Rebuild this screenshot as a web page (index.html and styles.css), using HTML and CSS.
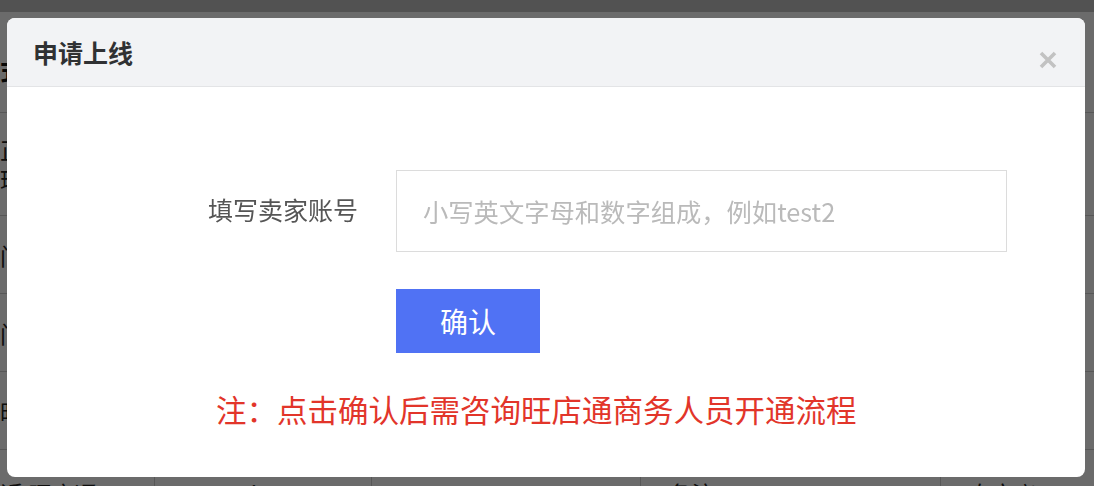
FILE: index.html
```html
<!DOCTYPE html>
<html lang="zh-CN">
<head>
<meta charset="utf-8">
<title>申请上线</title>
<link rel="stylesheet" href="styles.css">
</head>
<body>
<div class="page">
  <div class="topbar"></div>
  <h2 class="page-title">式</h2>
  <table class="grid">
    <colgroup><col class="c1"><col class="c2"><col class="c3"><col class="c4"><col class="c5"></colgroup>
    <tr class="r1"><td>正式<br>环境</td><td></td><td></td><td></td><td></td></tr>
    <tr class="r2"><td>门店</td><td></td><td></td><td></td><td></td></tr>
    <tr class="r3"><td>门店</td><td></td><td></td><td></td><td></td></tr>
    <tr class="r4"><td>旺店</td><td></td><td></td><td></td><td></td></tr>
    <tr class="r5"><td>近 旺店通</td><td>autoprj003</td><td>34819610</td><td>备注</td><td>自定义</td></tr>
  </table>
</div>
<div class="mask"></div>
<div class="modal">
  <div class="modal-header">
    <span class="modal-title">申请上线</span>
    <span class="modal-close" aria-label="关闭">
      <svg width="18" height="18" viewBox="0 0 18 18"><path d="M2 2 L16 16 M16 2 L2 16" stroke="#c2c2c2" stroke-width="3.6" stroke-linecap="butt"/></svg>
    </span>
  </div>
  <div class="modal-body">
    <div class="form-row">
      <label class="form-label">填写卖家账号</label>
      <input class="form-input" type="text" placeholder="小写英文字母和数字组成，例如test2">
    </div>
    <div class="form-actions">
      <button class="btn-primary">确认</button>
    </div>
    <p class="note">注：点击确认后需咨询旺店通商务人员开通流程</p>
  </div>
</div>
</body>
</html>
```

FILE: styles.css
```css
html, body {
  margin: 0;
  padding: 0;
  height: 100%;
  overflow: hidden;
}
body {
  font-family: "Noto Sans CJK SC", "Noto Sans", sans-serif;
  background: #ffffff;
  color: #222;
}
.page {
  width: 1094px;
}
.topbar {
  height: 12px;
  background: #c4c4c4;
}
.page-title {
  margin: 0;
  height: 100px;
  line-height: 116px;
  font-size: 26px;
  font-weight: 700;
  color: #111;
}
.grid {
  border-collapse: collapse;
  table-layout: fixed;
  width: 1094px;
  font-size: 23px;
  color: #222;
}
.grid .c1 { width: 154px; }
.grid .c2 { width: 217px; }
.grid .c3 { width: 269px; }
.grid .c4 { width: 300px; }
.grid .c5 { width: 154px; }
.grid td {
  border-top: 1px solid #d0d0d0;
  border-right: 1px solid #d0d0d0;
  padding: 0;
  vertical-align: middle;
  white-space: nowrap;
  overflow: hidden;
}
.grid td:nth-child(2),
.grid td:nth-child(3) { padding-left: 24px; }
.grid td:nth-child(4),
.grid td:nth-child(5) { padding-left: 28px; }
.grid .r1 td { height: 102px; line-height: 30px; }
.grid .r2 td, .grid .r3 td, .grid .r4 td { height: 77px; }
.grid .r5 td { height: 60px; vertical-align: top; padding-top: 26px; }

.mask {
  position: fixed;
  inset: 0;
  background: rgba(0, 0, 0, 0.58);
}

.modal {
  position: absolute;
  left: 7px;
  top: 18px;
  width: 1078px;
  height: 459px;
  background: #ffffff;
  border-radius: 8px;
  overflow: hidden;
}
.modal-header {
  height: 68px;
  background: #f2f3f5;
  border-bottom: 1px solid #e3e4e6;
  display: flex;
  justify-content: space-between;
  align-items: flex-start;
  padding: 0 28px 0 26px;
}
.modal-title {
  font-size: 25px;
  font-weight: 700;
  color: #303133;
  line-height: 68px;
}
.modal-close {
  margin-top: 33px;
  width: 18px;
  height: 18px;
  display: block;
}
.modal-close svg { display: block; }

.modal-body {
  padding-top: 83px;
}
.form-row {
  display: flex;
  align-items: center;
}
.form-label {
  width: 389px;
  text-align: right;
  font-size: 25px;
  color: #555;
  padding-right: 38px;
  box-sizing: border-box;
  flex: none;
  line-height: 40px;
  margin-top: -4px;
}
.form-input {
  width: 611px;
  height: 82px;
  box-sizing: border-box;
  border: 1px solid #dcdcdc;
  border-radius: 0;
  padding: 0 26px;
  font-family: "Noto Sans CJK SC", "Noto Sans", sans-serif;
  font-size: 25.3px;
  color: #333;
  outline: none;
  margin: 0;
}
.form-input::placeholder {
  color: #bababa;
}
.form-actions {
  padding-left: 389px;
  margin-top: 37px;
  display: flex;
}
.btn-primary {
  width: 144px;
  height: 64px;
  border: none;
  border-radius: 0;
  background: #5072f4;
  color: #ffffff;
  font-family: "Noto Sans CJK SC", "Noto Sans", sans-serif;
  font-size: 28px;
  padding: 0;
  margin: 0;
}
.note {
  margin: 34px 0 0 0;
  padding-left: 209px;
  font-size: 30.5px;
  line-height: 44px;
  color: #e2352a;
}
```
